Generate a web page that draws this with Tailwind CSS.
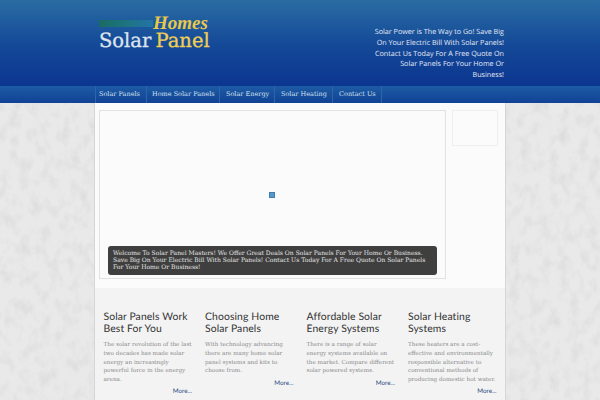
<!DOCTYPE html>
<html>
<head>
<meta charset="utf-8">
<script src="https://cdn.jsdelivr.net/npm/@tailwindcss/browser@4"></script>
<title>Solar Panel Homes</title>
</head>
<body class="relative h-[400px] w-[600px] overflow-hidden bg-[#e9e9e9] font-['DejaVu_Serif',serif] [text-rendering:geometricPrecision]">
<!-- concrete texture -->
<svg class="absolute left-0 top-0 h-[400px] w-[600px]" aria-hidden="true">
  <filter id="concrete">
    <feTurbulence type="fractalNoise" baseFrequency="0.1 0.07" numOctaves="5" seed="11"/>
    <feColorMatrix values="0 0 0 0 0.5  0 0 0 0 0.5  0 0 0 0 0.5  2.2 0 0 0 -0.95"/>
  </filter>
  <rect width="600" height="400" filter="url(#concrete)" opacity="0.25"/>
</svg>

<div class="relative">
  <header class="h-[86px] bg-gradient-to-b from-[#2b6ca3] via-[#154a98] via-50% to-[#0c3590]">
    <div class="mx-auto flex w-[410px] justify-between">
      <div class="relative ml-[4px] h-[86px] w-[115px]">
        <div class="absolute left-0 top-[20px] h-[7px] w-[54px] bg-gradient-to-r from-[#1a6b62] via-[#1d7480] to-[#2473a8]"></div>
        <div class="absolute left-[54px] top-[17px] font-['Liberation_Serif',serif] text-[19px] leading-[14px] font-bold italic text-[#e8c84a]">Homes</div>
        <div class="absolute left-0 top-[33px] whitespace-nowrap text-[19.5px] leading-[16px] text-[#dfe4ee] [word-spacing:-2px] [-webkit-text-stroke:0.3px]">Solar <span class="text-[#f0cf52]">Panel</span></div>
      </div>
      <p class="mr-[1px] mt-[27px] w-[135px] text-right font-['Open_Sans',sans-serif] text-[7.2px] leading-[10.8px] text-[#e3e9f4]">Solar Power is The Way to Go! Save Big<br>On Your Electric Bill With Solar Panels!<br>Contact Us Today For A Free Quote On<br>Solar Panels For Your Home Or<br>Business!</p>
    </div>
  </header>

  <nav class="h-[17px] bg-gradient-to-b from-[#1d5ba4] to-[#114295]">
    <ul class="mx-auto flex h-full w-[410px] text-[6.5px] leading-[17px] text-[#d5e0ee]">
      <li class="w-[52px] border-x border-[#2c66a8] pl-[3px]">Solar Panels</li>
      <li class="w-[73px] border-r border-[#2c66a8] pl-[5px]">Home Solar Panels</li>
      <li class="w-[55px] border-r border-[#2c66a8] pl-[6px]">Solar Energy</li>
      <li class="w-[58px] border-r border-[#2c66a8] pl-[6px]">Solar Heating</li>
      <li class="w-[49px] border-r border-[#2c66a8] pl-[6px]">Contact Us</li>
    </ul>
  </nav>

  <main class="mx-auto h-[297px] w-[412px] border-x border-[#d6d6d6] bg-[#fbfbfc]">
    <div class="flex h-[185px] gap-[6px] pl-[4px] pt-[7px]">
      <div class="relative h-[169px] w-[347px] border border-[#e2e2e2] bg-[#fbfbfc]">
        <div class="absolute left-[169px] top-[81px] h-[6px] w-[6px] border border-[#3d7fb0] bg-[#5b97c4]"></div>
        <div class="absolute left-[8px] top-[135px] h-[29px] w-[329px] whitespace-nowrap rounded-[3px] bg-[#3f3f3f] px-[5px] py-[3.5px] text-[6.05px] leading-[7.35px] text-[#e4e4e4]">Welcome To Solar Panel Masters! We Offer Great Deals On Solar Panels For Your Home Or Business.<br>Save Big On Your Electric Bill With Solar Panels! Contact Us Today For A Free Quote On Solar Panels<br>For Your Home Or Business!</div>
      </div>
      <div class="h-[36px] w-[46px] border border-[#efefef]"></div>
    </div>

    <section class="grid h-[112px] grid-cols-[101.5px_101.5px_101.5px_105.5px] bg-[#f3f3f4] pt-[24px]">
      <article class="w-[97px] pl-[8.5px]">
        <h2 class="font-['Lato',sans-serif] text-[10.4px] leading-[11.7px] text-[#333] [letter-spacing:0.1px]">Solar Panels Work<br>Best For You</h2>
        <p class="mt-[6px] whitespace-nowrap text-[5.65px] leading-[8.6px] text-[#8a8a8a]">The solar revolution of the last<br>two decades has made solar<br>energy an increasingly<br>powerful force in the energy<br>arena.</p>
        <a class="mt-[4px] block text-right font-['Lato',sans-serif] text-[6.3px] leading-[8px] text-[#2c4a80]">More...</a>
      </article>
      <article class="w-[97px] pl-[8.5px]">
        <h2 class="font-['Lato',sans-serif] text-[10.4px] leading-[11.7px] text-[#333] [letter-spacing:0.1px]">Choosing Home<br>Solar Panels</h2>
        <p class="mt-[6px] whitespace-nowrap text-[5.65px] leading-[8.6px] text-[#8a8a8a]">With technology advancing<br>there are many home solar<br>panel systems and kits to<br>choose from.</p>
        <a class="mt-[4px] block text-right font-['Lato',sans-serif] text-[6.3px] leading-[8px] text-[#2c4a80]">More...</a>
      </article>
      <article class="w-[97px] pl-[8.5px]">
        <h2 class="font-['Lato',sans-serif] text-[10.4px] leading-[11.7px] text-[#333] [letter-spacing:0.1px]">Affordable Solar<br>Energy Systems</h2>
        <p class="mt-[6px] whitespace-nowrap text-[5.65px] leading-[8.6px] text-[#8a8a8a]">There is a range of solar<br>energy systems available on<br>the market. Compare different<br>solar powered systems.</p>
        <a class="mt-[4px] block text-right font-['Lato',sans-serif] text-[6.3px] leading-[8px] text-[#2c4a80]">More...</a>
      </article>
      <article class="w-[97px] pl-[8.5px]">
        <h2 class="font-['Lato',sans-serif] text-[10.4px] leading-[11.7px] text-[#333] [letter-spacing:0.1px]">Solar Heating<br>Systems</h2>
        <p class="mt-[6px] whitespace-nowrap text-[5.65px] leading-[8.6px] text-[#8a8a8a]">These heaters are a cost-<br>effective and environmentally<br>responsible alternative to<br>conventional methods of<br>producing domestic hot water.</p>
        <a class="mt-[4px] block text-right font-['Lato',sans-serif] text-[6.3px] leading-[8px] text-[#2c4a80]">More...</a>
      </article>
    </section>
  </main>
</div>
</body>
</html>
